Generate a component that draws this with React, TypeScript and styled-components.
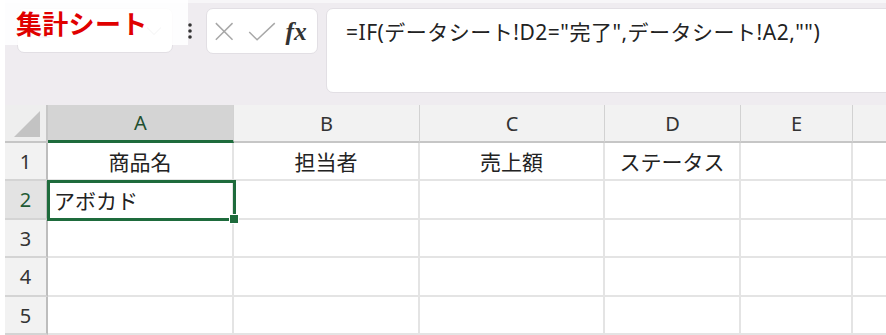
import React from "react";
import styled, { createGlobalStyle } from "styled-components";

const Global = createGlobalStyle`
  html, body { margin: 0; padding: 0; background: #ffffff; }
  body { font-family: "Noto Sans", "Noto Sans CJK JP", sans-serif; }
`;

const Page = styled.div`
  width: 886px;
  height: 335px;
  overflow: hidden;
  padding-left: 5px;
  box-sizing: border-box;
  background: #ffffff;
  position: relative;
`;

const Toolbar = styled.div`
  height: 105px;
  background: #efecf0;
  display: flex;
  align-items: flex-start;
  padding: 5px 0 0 12px;
  box-sizing: border-box;
  border-top: 3px solid #f7f6f8;
  overflow: hidden;
`;

const Box = styled.div<{ $w: number; $h: number }>`
  width: ${(p) => p.$w}px;
  height: ${(p) => p.$h}px;
  background: #ffffff;
  border: 1px solid #e2dfe4;
  border-radius: 7px;
  box-sizing: border-box;
  display: flex;
  align-items: center;
  flex-shrink: 0;
`;

const NameText = styled.span`
  font-family: "Noto Sans", sans-serif;
  font-size: 18px;
  color: #b9b9b9;
  margin-left: 11px;
  flex: 1;
`;

const Dots = styled.div`
  width: 33px;
  height: 45px;
  flex-shrink: 0;
  display: flex;
  align-items: center;
  justify-content: center;
`;

const FormulaText = styled.div`
  font-family: "Noto Sans", "Noto Sans CJK JP", sans-serif;
  font-size: 21px;
  color: #222;
  padding: 7px 0 0 19px;
  align-self: flex-start;
  white-space: nowrap;
  letter-spacing: 0.5px;
`;

const Label = styled.div`
  position: absolute;
  left: 0;
  top: 0;
  width: 188px;
  height: 45px;
  background: rgba(255, 255, 255, 0.88);
  color: #e00000;
  font-family: "Noto Sans CJK JP", sans-serif;
  font-weight: 700;
  font-size: 26px;
  line-height: 45px;
  padding-left: 16px;
  box-sizing: border-box;
  letter-spacing: 0.3px;
`;

const Grid = styled.div`
  display: grid;
  grid-template-columns: 43px 186px 186px 185px 136px 112px 40px;
  grid-template-rows: 38px 38px 39px 38px 39px 38px;
  position: relative;
  font-family: "Noto Sans", "Noto Sans CJK JP", sans-serif;
  font-size: 21px;
  color: #222;
`;

const Corner = styled.div`
  background: #eeeeee;
  border-right: 2px solid #c6c6c6;
  border-bottom: 2px solid #c6c6c6;
  box-sizing: border-box;
  position: relative;
`;

const ColHead = styled.div<{ $sel?: boolean }>`
  background: ${(p) => (p.$sel ? "#d4d4d4" : "#f2f2f2")};
  border-right: 1px solid #d2d2d2;
  border-bottom: ${(p) => (p.$sel ? "3px solid #1e6b3c" : "2px solid #c6c6c6")};
  box-sizing: border-box;
  display: flex;
  align-items: center;
  justify-content: center;
  color: ${(p) => (p.$sel ? "#1f4f30" : "#333")};
  font-size: 20px;
`;

const RowHead = styled.div<{ $sel?: boolean }>`
  background: ${(p) => (p.$sel ? "#e3e3e3" : "#f2f2f2")};
  border-right: 2px solid #bdbdbd;
  border-bottom: 2px solid #d4d4d4;
  box-sizing: border-box;
  display: flex;
  align-items: center;
  justify-content: center;
  color: ${(p) => (p.$sel ? "#1f5a35" : "#333")};
  font-size: 20px;
`;

const Cell = styled.div<{ $align?: string }>`
  background: #ffffff;
  border-right: 2px solid #e4e4e4;
  border-bottom: 2px solid #e4e4e4;
  box-sizing: border-box;
  display: flex;
  align-items: center;
  justify-content: ${(p) => p.$align || "flex-start"};
  padding: 0 6px;
  white-space: nowrap;
  overflow: hidden;
`;

const Selection = styled.div`
  position: absolute;
  left: 42px;
  top: 75px;
  width: 189px;
  height: 41px;
  border: 3px solid #1e6b3c;
  box-sizing: border-box;
  pointer-events: none;
`;

const Handle = styled.div`
  position: absolute;
  right: -6px;
  bottom: -6px;
  width: 8px;
  height: 8px;
  background: #1e6b3c;
  border: 1px solid #ffffff;
`;

const cols = ["A", "B", "C", "D", "E", ""];
const data: [string, string][][] = [
  [["商品名", "center"], ["担当者", "center"], ["売上額", "center"], ["ステータス", "center"], ["", ""], ["", ""]],
  [["アボカド", "flex-start"], ["", ""], ["", ""], ["", ""], ["", ""], ["", ""]],
  [["", ""], ["", ""], ["", ""], ["", ""], ["", ""], ["", ""]],
  [["", ""], ["", ""], ["", ""], ["", ""], ["", ""], ["", ""]],
  [["", ""], ["", ""], ["", ""], ["", ""], ["", ""], ["", ""]],
];

export default function App() {
  return (
    <Page>
      <Global />
      <Toolbar>
        <Box $w={156} $h={45}>
          <NameText>A2</NameText>
          <svg width="16" height="10" viewBox="0 0 16 10" style={{ marginRight: 10 }}>
            <path d="M1 1.5 L8 8.5 L15 1.5" fill="none" stroke="#c4c4c4" strokeWidth="1.4" />
          </svg>
        </Box>
        <Dots>
          <svg width="6" height="18" viewBox="0 0 6 18">
            <circle cx="3" cy="3" r="1.8" fill="#333" />
            <circle cx="3" cy="9" r="1.8" fill="#333" />
            <circle cx="3" cy="15" r="1.8" fill="#333" />
          </svg>
        </Dots>
        <Box $w={112} $h={46}>
          <svg width="112" height="44" viewBox="0 0 112 44">
            <path d="M9 14 L26 31 M26 14 L9 31" stroke="#a8a8a8" strokeWidth="1.5" fill="none" />
            <path d="M43 23 L51 31 L69 14" stroke="#a8a8a8" strokeWidth="1.5" fill="none" />
            <text x="80" y="31" fontFamily="'Liberation Serif', serif" fontStyle="italic" fontWeight="700" fontSize="26" fill="#333">fx</text>
          </svg>
        </Box>
        <Box $w={570} $h={85} style={{ marginLeft: 8 }}>
          <FormulaText>=IF(データシート!D2="完了",データシート!A2,"")</FormulaText>
        </Box>
      </Toolbar>
      <Grid>
        <Corner>
          <svg width="28" height="26" viewBox="0 0 28 26" style={{ position: "absolute", right: 4, bottom: 4 }}>
            <path d="M26 0 L26 26 L0 26 Z" fill="#c3c3c3" />
          </svg>
        </Corner>
        {cols.map((c, i) => (
          <ColHead key={i} $sel={c === "A"}>{c}</ColHead>
        ))}
        {data.map((row, r) => (
          <React.Fragment key={r}>
            <RowHead $sel={r === 1}>{r + 1}</RowHead>
            {row.map(([t, a], ci) => (
              <Cell key={ci} $align={a}>{t}</Cell>
            ))}
          </React.Fragment>
        ))}
        <Selection>
          <Handle />
        </Selection>
      </Grid>
      <Label>集計シート</Label>
    </Page>
  );
}
